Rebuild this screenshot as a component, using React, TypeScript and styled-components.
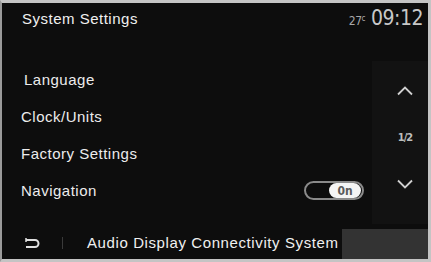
import styled, { createGlobalStyle } from 'styled-components';

const Global = createGlobalStyle`
  html, body {
    margin: 0;
    padding: 0;
    background: #bdbdbd;
    overflow: hidden;
  }
  body {
    font-family: "Liberation Sans", Arial, sans-serif;
  }
`;

const Screen = styled.div`
  box-sizing: border-box;
  width: 431px;
  height: 262px;
  border-top: 3px solid #c4c4c4;
  border-left: 2px solid #9a9a9a;
  border-right: 3px solid #c4c4c4;
  border-bottom: 3px solid #c4c4c4;
  background: #0d0d0d;
  display: flex;
  flex-direction: column;
  color: #f2f2f2;
`;

const Header = styled.header`
  height: 40px;
  display: flex;
  align-items: center;
  justify-content: space-between;
  padding: 0 5px 10px 20px;
  box-sizing: border-box;
`;

const Title = styled.h1`
  margin: 0;
  font-size: 15px;
  letter-spacing: 0.5px;
  font-weight: normal;
  color: #f0f0f0;
`;

const Status = styled.div`
  display: flex;
  align-items: baseline;
  gap: 6px;
  color: #c8c8c8;
  font-family: "DejaVu Sans Condensed", "Liberation Sans Narrow", sans-serif;
`;

const Temp = styled.span`
  font-size: 12px;
  letter-spacing: -0.5px;
  color: #a8a8a8;

  sup {
    font-size: 8px;
    vertical-align: 4px;
  }
`;

const Clock = styled.span`
  font-size: 21px;
  letter-spacing: -0.5px;
`;

const Main = styled.main`
  flex: 1;
  display: flex;
  padding-top: 18px;
`;

const List = styled.ul`
  flex: 1;
  list-style: none;
  margin: 0;
  padding: 0;
  display: flex;
  flex-direction: column;
`;

const Item = styled.li<{ $indent?: number }>`
  height: 37px;
  display: flex;
  align-items: center;
  justify-content: space-between;
  padding-left: ${p => p.$indent ?? 19}px;
  padding-right: 8px;
  font-size: 15px;
  letter-spacing: 0.5px;
  color: #ececec;
`;

const Toggle = styled.div`
  box-sizing: border-box;
  width: 60px;
  height: 19px;
  border: 2px solid #8a8a8a;
  border-radius: 10px;
  display: flex;
  justify-content: flex-end;
  align-items: center;
  padding: 1px;
`;

const Knob = styled.span`
  width: 32px;
  height: 15px;
  border-radius: 8px;
  background: #f4f4f4;
  color: #5a5a5a;
  font-size: 12px;
  font-weight: bold;
  letter-spacing: 0;
  display: flex;
  align-items: center;
  justify-content: center;
  font-family: "DejaVu Sans Condensed", sans-serif;
`;

const Pager = styled.aside`
  width: 56px;
  margin-bottom: 2px;
  background: #121212;
  display: flex;
  flex-direction: column;
  align-items: center;
  gap: 34px;
  padding: 24px 0 0 10px;
  box-sizing: border-box;
  color: #cfcfcf;
`;

const PageNum = styled.span`
  font-size: 11px;
  line-height: 13px;
  font-family: "DejaVu Sans Condensed", sans-serif;
  font-weight: bold;
  color: #bdbdbd;
  letter-spacing: -1px;
`;

const Footer = styled.footer`
  height: 33px;
  display: flex;
  align-items: stretch;
`;

const Back = styled.div`
  width: 60px;
  display: flex;
  align-items: center;
  justify-content: center;
`;

const Divider = styled.span`
  width: 1px;
  height: 12px;
  background: #3a3a3a;
  align-self: center;
`;

const Breadcrumb = styled.div`
  display: flex;
  align-items: center;
  padding-left: 24px;
  width: 255px;
  font-size: 15px;
  letter-spacing: 0.6px;
  color: #f0f0f0;
  white-space: nowrap;
`;

const Filler = styled.div`
  flex: 1;
  background: #333;
  margin-top: 3px;
`;

const Chevron = ({ up }: { up?: boolean }) => (
  <svg width="16" height="12" viewBox="0 0 16 12">
    <polyline
      points={up ? '1,9.5 8,2.5 15,9.5' : '1,2.5 8,9.5 15,2.5'}
      fill="none"
      stroke="#d0d0d0"
      strokeWidth="1.8"
    />
  </svg>
);

export default function App() {
  return (
    <>
      <Global />
      <Screen>
        <Header>
          <Title>System Settings</Title>
          <Status>
            <Temp>
              27<sup>c</sup>
            </Temp>
            <Clock>09:12</Clock>
          </Status>
        </Header>
        <Main>
          <List>
            <Item $indent={22}>Language</Item>
            <Item>Clock/Units</Item>
            <Item>Factory Settings</Item>
            <Item>
              Navigation
              <Toggle>
                <Knob>0n</Knob>
              </Toggle>
            </Item>
          </List>
          <Pager>
            <Chevron up />
            <PageNum>1/2</PageNum>
            <Chevron />
          </Pager>
        </Main>
        <Footer>
          <Back>
            <svg width="18" height="12" viewBox="0 0 18 12">
              <path d="M3 3 H12 A3.5 3.5 0 0 1 12 10 H3" fill="none" stroke="#e0e0e0" strokeWidth="2" />
              <path d="M3 1 V5" stroke="#e0e0e0" strokeWidth="1.5" />
            </svg>
          </Back>
          <Divider />
          <Breadcrumb>Audio Display Connectivity System</Breadcrumb>
          <Filler />
        </Footer>
      </Screen>
    </>
  );
}
